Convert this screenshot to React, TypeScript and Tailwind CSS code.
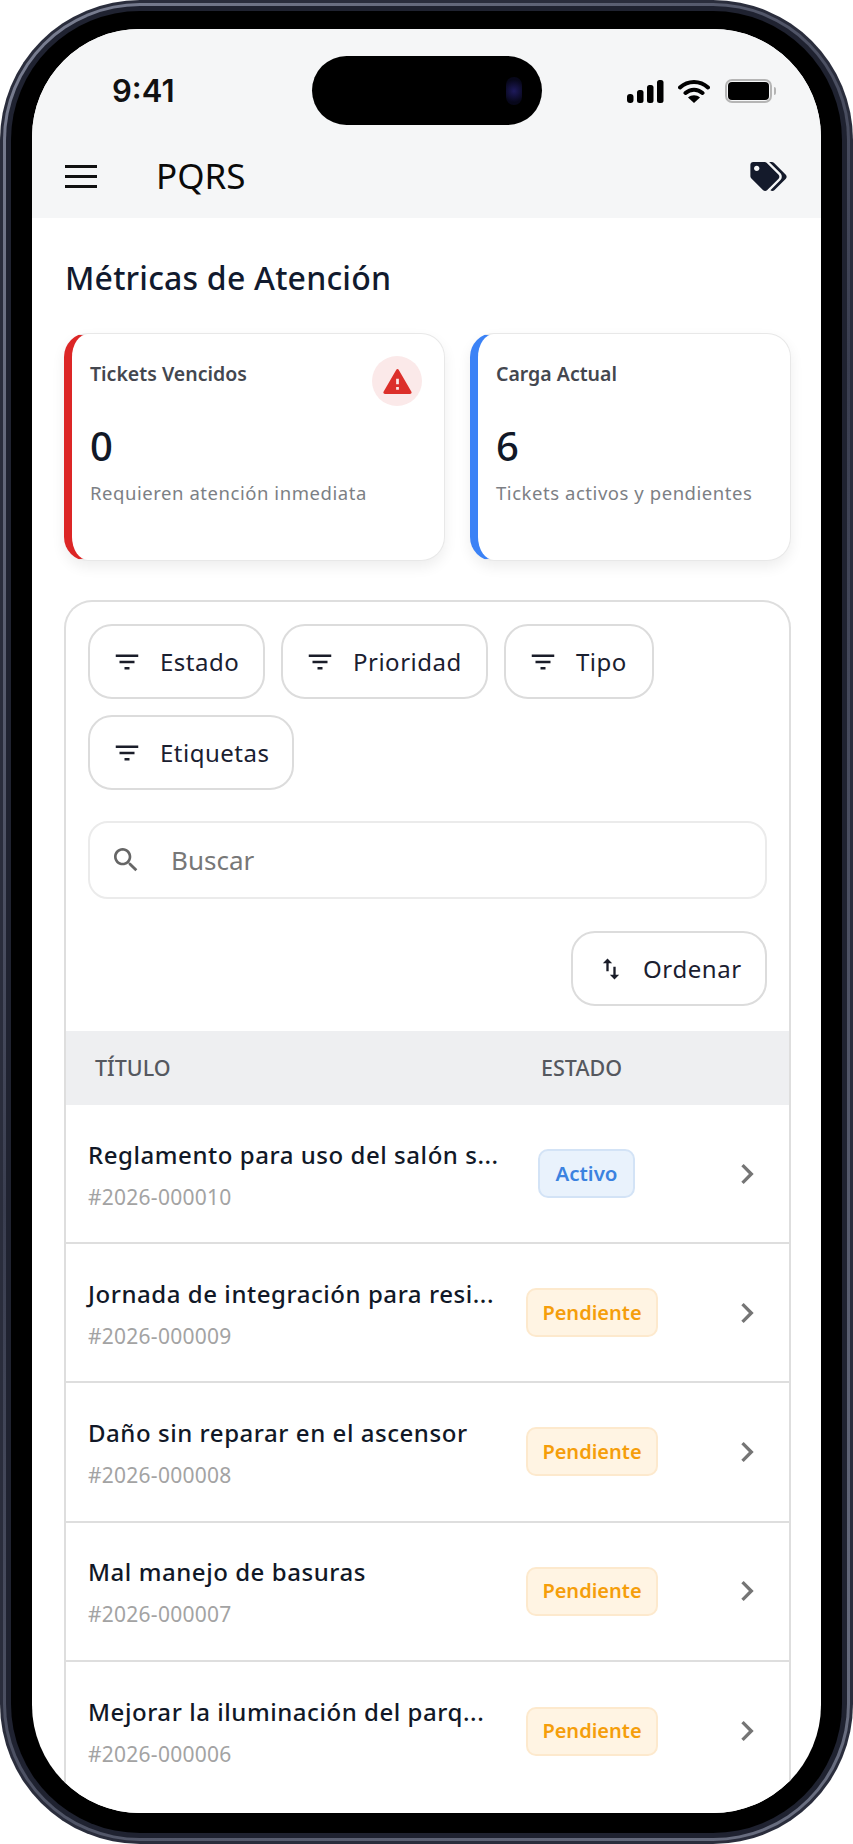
import React from "react";
import { FaTags } from "react-icons/fa";

const FilterIcon = () => (
  <svg viewBox="0 0 24 24" className="w-[30px] h-[30px] shrink-0 fill-[#1a1d29]"><path d="M10 18h4v-2h-4zM3 6v2h18V6zm3 7h12v-2H6z" /></svg>
);

const FilterBtn = ({ label, w }: { label: string; w: string }) => (
  <div className={`${w} h-[75px] flex items-center pl-[22px] gap-[18px] rounded-[24px] border-2 border-[#dcdcdc] bg-white text-[24px] tracking-[0.5px] text-[#1a2030]`}>
    <FilterIcon />
    <span>{label}</span>
  </div>
);

const Card = ({ bar, title, value, sub, w, alert }: { bar: string; title: string; value: string; sub: string; w: string; alert?: boolean }) => (
  <div className={`${w} ${bar} relative h-[228px] rounded-[24px] border-l-[8px] border-y border-r border-y-[#e8e8e8] border-r-[#e8e8e8] bg-white pl-[18px] shadow-[0_6px_14px_rgba(0,0,0,0.07)]`}>
    <div className="pt-[27px] text-[19.5px] leading-[26px] font-semibold text-[#44474f]">{title}</div>
    <div className="mt-[32px] text-[40px] leading-[54px] font-medium text-[#111827]">{value}</div>
    <div className="mt-[7px] text-[18.5px] leading-[26px] tracking-[0.55px] text-[#7c7f85]">{sub}</div>
    {alert && (
      <div className="absolute right-[22px] top-[22px] w-[50px] h-[50px] rounded-full bg-[#fbe9e9] flex items-center justify-center">
        <svg viewBox="0 0 24 24" className="w-[33px] h-[33px] fill-[#dc2f2a]"><path d="M2.730 21h18.530c.77 0 1.250-.83.87-1.500l-9.270-16c-.38-.67-1.360-.67-1.740 0l-9.270 16c-.38.67.1 1.500.87 1.500zM13 18h-2v-2h2v2zm0-4h-2v-4h2v4z" /></svg>
      </div>
    )}
  </div>
);

const rows = [
  { t: "Reglamento para uso del salón s...", id: "#2026-000010", s: "Activo" },
  { t: "Jornada de integración para resi...", id: "#2026-000009", s: "Pendiente" },
  { t: "Daño sin reparar en el ascensor", id: "#2026-000008", s: "Pendiente" },
  { t: "Mal manejo de basuras", id: "#2026-000007", s: "Pendiente" },
  { t: "Mejorar la iluminación del parq...", id: "#2026-000006", s: "Pendiente" },
];

const Row = ({ t, id, s }: { t: string; id: string; s: string }) => {
  const active = s === "Activo";
  return (
    <div className="h-[139.2px] shrink-0 flex items-center border-b-2 border-[#dedede] last:border-b-0 pl-[22px]">
      <div className={`${active ? "w-[450px]" : "w-[438px]"} shrink-0 whitespace-nowrap pt-[2px]`}>
        <div className="text-[24px] leading-[32px] font-medium tracking-[0.55px] text-[#111827]">{t}</div>
        <div className="mt-[12px] text-[21px] leading-[28px] tracking-[0.25px] text-[#a3a3a3]">{id}</div>
      </div>
      <div className={active
        ? "w-[97px] h-[49px] flex items-center justify-center rounded-[10px] border-2 border-[#d3e3f6] bg-[#e9f2fc] text-[20.5px] font-semibold text-[#3b82e0]"
        : "w-[132px] h-[49px] flex items-center justify-center rounded-[10px] border-2 border-[#fde9cd] bg-[#fff4e3] text-[20px] font-semibold text-[#f59e0b]"}>
        {s}
      </div>
      <svg viewBox="0 0 24 24" className={`${active ? "ml-[92px]" : "ml-[69px]"} w-[40px] h-[40px] fill-[#757575]`}><path d="M10 6 8.590 7.410 13.170 12l-4.580 4.590L10 18l6-6z" /></svg>
    </div>
  );
};

export default function App() {
  return (
    <div className="w-[853px] h-[1844px] bg-white font-['Noto_Sans',sans-serif]">
      <div className="h-full rounded-[140px] bg-[#2a2d3c] p-[3px]">
        <div className="h-full rounded-[137px] bg-[linear-gradient(135deg,#7c8194,#3a3e50_45%,#6b7082)] p-[3px]">
          <div className="h-full rounded-[134px] bg-[#1f2230] p-[5px]">
            <div className="h-full rounded-[129px] bg-black px-[21px] pt-[18px] pb-[20px]">
              <div className="relative h-full rounded-[108px] bg-white overflow-hidden flex flex-col">
                {/* Header */}
                <div className="h-[189px] shrink-0 bg-[#f5f6f7] flex flex-col">
                  <div className="relative h-[95px] flex justify-between items-start pt-[40px] pl-[80px] pr-[45px] shrink-0">
                    <span className="font-['Inter',sans-serif] text-[31px] leading-[44px] font-semibold text-[#111]">9:41</span>
                    <div className="absolute left-[280px] top-[27px] w-[230px] h-[69px] rounded-full bg-black flex items-center justify-end pr-[20px]">
                      <div className="w-[16px] h-[28px] rounded-full bg-[radial-gradient(circle,#1e1a5c,#07071a_70%)]" />
                    </div>
                    <div className="flex items-center gap-[12px] pt-[10px]">
                      <svg viewBox="0 0 37 23" className="w-[37px] h-[23px] mr-[2px] fill-black">
                        <rect x="0" y="14" width="6.5" height="9" rx="3" />
                        <rect x="10" y="10" width="6.5" height="13" rx="2.5" />
                        <rect x="20" y="5" width="6.5" height="18" rx="2.5" />
                        <rect x="30" y="0" width="6.5" height="23" rx="2.5" />
                      </svg>
                      <svg viewBox="0 0 32 24" className="w-[32px] h-[24px] mr-[3px]">
                        <path d="M2 8.500C10 1 22 1 30 8.500M7.500 14C12.500 9.500 19.500 9.500 24.500 14" fill="none" stroke="#000" strokeWidth="4" strokeLinecap="round" />
                        <path d="M16 24l-6-5.500c3.500-3 8.500-3 12 0z" fill="#000" />
                      </svg>
                      <div className="flex items-center gap-[2px]">
                        <div className="w-[47px] h-[24px] rounded-[7px] border-2 border-[#b5b5b5] p-[1px]"><div className="h-full rounded-[4px] bg-black" /></div>
                        <div className="w-[2px] h-[8px] rounded-r bg-[#b5b5b5]" />
                      </div>
                    </div>
                  </div>
                  <div className="flex-1 flex items-center pl-[33px] pr-[34px] pt-[10px]">
                    <div className="w-[32px] flex flex-col gap-[7px]">
                      <div className="h-[3px] bg-[#111]" />
                      <div className="h-[3px] bg-[#111]" />
                      <div className="h-[3px] bg-[#111]" />
                    </div>
                    <div className="ml-[59px] text-[35px] leading-[44px] text-[#0a0a0a] flex-1">PQRS</div>
                    <FaTags className="w-[37px] h-[29px] text-[#141a2b]" />
                  </div>
                </div>
                {/* Main */}
                <div className="pl-[32px] pr-[30px] flex-1 min-h-0 flex flex-col">
                  <h1 className="ml-[1px] mt-[38px] text-[32px] leading-[44px] font-medium tracking-[0.2px] text-[#111a2e]">Métricas de Atención</h1>
                  <div className="mt-[33px] flex gap-[25px] shrink-0">
                    <Card w="w-[381px]" bar="border-l-[#dc2626]" title="Tickets Vencidos" value="0" sub="Requieren atención inmediata" alert />
                    <Card w="w-[321px]" bar="border-l-[#3b82f6]" title="Carga Actual" value="6" sub="Tickets activos y pendientes" />
                  </div>
                  <div className="mt-[39px] flex-1 rounded-t-[28px] border-2 border-b-0 border-[#dedede] bg-white flex flex-col min-h-[1300px]">
                    <div className="px-[22px] pt-[22px]">
                      <div className="flex flex-wrap gap-x-[16px] gap-y-[16px]">
                        <FilterBtn label="Estado" w="w-[177px]" />
                        <FilterBtn label="Prioridad" w="w-[207px]" />
                        <FilterBtn label="Tipo" w="w-[150px]" />
                        <FilterBtn label="Etiquetas" w="w-[206px]" />
                      </div>
                      <div className="mt-[31px] h-[78px] flex items-center rounded-[20px] border-2 border-[#ebebeb] bg-white pl-[20px]">
                        <svg viewBox="0 0 24 24" className="w-[32px] h-[32px] fill-[#666]"><path d="M15.500 14h-.79l-.28-.27C15.410 12.590 16 11.110 16 9.500 16 5.910 13.090 3 9.500 3S3 5.910 3 9.500 5.910 16 9.500 16c1.610 0 3.090-.59 4.230-1.570l.27.28v.79l5 4.990L20.490 19zm-6 0C7.010 14 5 11.990 5 9.500S7.010 5 9.500 5 14 7.010 14 9.500 11.990 14 9.500 14" /></svg>
                        <span className="ml-[29px] text-[26px] text-[#777]">Buscar</span>
                      </div>
                      <div className="mt-[32px] flex justify-end">
                        <div className="w-[196px] h-[75px] flex items-center pl-[24px] gap-[18px] rounded-[24px] border-2 border-[#dcdcdc] bg-white text-[24px] tracking-[0.6px] text-[#1a2030]">
                          <svg viewBox="0 0 24 24" className="w-[28px] h-[28px] fill-[#1a1d29]"><path d="M16 17.010V10h-2v7.010h-3L15 21l4-3.990zM9 3 5 6.990h3V14h2V6.990h3z" /></svg>
                          <span>Ordenar</span>
                        </div>
                      </div>
                    </div>
                    <div className="mt-[25px] h-[74px] shrink-0 bg-[#eeeff1] flex items-center pl-[29px] text-[21.5px] font-medium text-[#55585f]">
                      <span className="w-[446px]">TÍTULO</span>
                      <span>ESTADO</span>
                    </div>
                    {rows.map((r) => <Row key={r.id} {...r} />)}
                  </div>
                </div>
              </div>
            </div>
          </div>
        </div>
      </div>
    </div>
  );
}
